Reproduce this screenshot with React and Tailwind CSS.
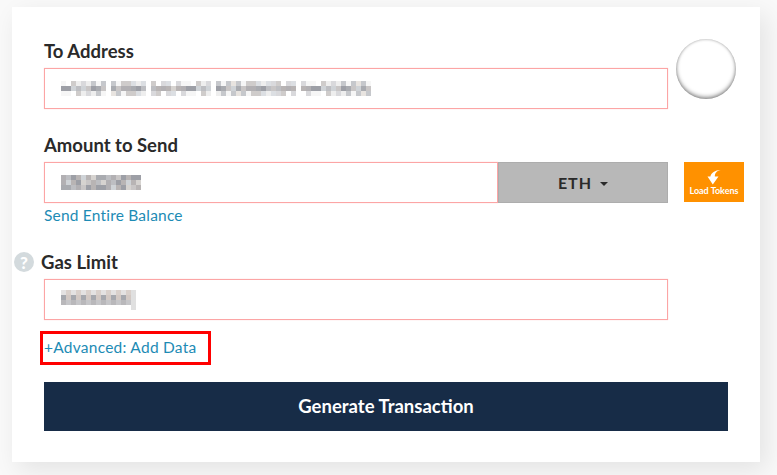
// Send-transaction form card with blurred (mosaic) field values
const SHADES = ["#a9abb0", "#bdbec2", "#c9c6c6", "#d6d3d0", "#b8b4b4", "#b2b0b3", "#cfd3d7", "#9d9fa6"];
const LIGHT = ["#ffffff", "#eeeeee", "#d9d9dc", "#e8e4e0", "#c6c8cc", "#f6f6f6", "#dcdfe3", "#cfcccb"];

function Mosaic({ cols, rows = 3, cell = 5, seed = 3, soft = false, gaps = [] }) {
  const cells = [];
  let v = seed;
  for (let y = 0; y < rows; y++) {
    const palette = soft && y !== 1 ? LIGHT : SHADES;
    for (let x = 0; x < cols; x++) {
      v = (v * 31 + 7) % 101;
      if (gaps.includes(x)) continue;
      cells.push(<rect key={`${x}-${y}`} x={x * cell} y={y * cell} width={cell} height={cell} fill={palette[v % palette.length]} />);
    }
  }
  return (
    <svg width={cols * cell} height={rows * cell} className="block" shapeRendering="crispEdges">
      {cells}
    </svg>
  );
}

// gas limit value: evenly spaced digits, so the blur alternates dark and tan
function GasMosaic() {
  const cells = [];
  for (let x = 0; x < 14; x++) {
    cells.push(<rect key={`t${x}`} x={x * 5} y={0} width={5} height={5} fill={x % 2 ? "#d9d0cb" : "#e4e2e2"} />);
    cells.push(<rect key={`m${x}`} x={x * 5} y={5} width={5} height={5} fill={x % 2 ? "#d3c9c4" : "#a6a8ae"} />);
    cells.push(<rect key={`b${x}`} x={x * 5} y={10} width={5} height={5} fill={x % 2 ? "#c6c6c9" : "#b9b8bb"} />);
  }
  return (
    <svg width={75} height={20} className="block" shapeRendering="crispEdges">
      {cells}
      <rect x={70} y={0} width={5} height={20} fill="#e0e0e0" />
    </svg>
  );
}

function Label({ children }) {
  return <div className="h-6 text-[18.5px] font-bold leading-6 text-[#2a2a2a]">{children}</div>;
}

function Field({ children, className = "" }) {
  return (
    <div className={`flex h-[41px] items-center border border-[#fca5a5] bg-white pl-4 shadow-[0_0_1px_#fecaca] ${className}`}>
      {children}
    </div>
  );
}

export default function App() {
  return (
    <div className="h-[475px] w-[777px] overflow-hidden bg-[#f9f9f9] pl-3 pt-[7px] font-['Lato',sans-serif]">
      <div className="h-[455px] w-[748px] bg-white pl-8 pt-8 shadow-[6px_8px_24px_rgba(0,0,0,0.09)]">
        <div className="flex items-start gap-2">
          <div className="w-[624px]">
            <Label>To Address</Label>
            <Field className="mt-[5px]">
              <Mosaic cols={62} seed={5} soft gaps={[9, 17, 30, 47]} />
            </Field>
          </div>
          <div className="size-[60px] rounded-full bg-white shadow-[inset_0_-2px_4px_rgba(0,0,0,0.4),inset_0_0_3px_rgba(0,0,0,0.25)]" />
        </div>

        <div className="mt-6">
          <Label>Amount to Send</Label>
          <div className="mt-[5px] flex items-start">
            <Field className="w-[454px]">
              <Mosaic cols={16} seed={11} />
            </Field>
            <button className="flex h-[41px] w-[170px] items-center justify-center gap-2 border border-[#adadad] bg-[#b8b8b8] text-[16px] font-bold tracking-[1px] text-[#2a2a2a]">
              ETH
              <span className="mt-[2px] border-x-[4px] border-t-[4px] border-x-transparent border-t-[#2a2a2a]" />
            </button>
            <button className="ml-4 flex h-10 w-[60px] flex-col items-center justify-center bg-[#ff9100] text-white">
              <svg width="14" height="15" viewBox="0 0 14 15" className="mt-[2px]">
                <path d="M13.5 0C9.5 0.8 7.8 3.4 7.8 6.6H11.5L5.8 14.5L0.5 6.6H3.4C4 3 8 0.2 13.5 0Z" fill="#fff" />
              </svg>
              <span className="text-[9px] font-bold leading-[12px]">Load Tokens</span>
            </button>
          </div>
          <a className="mt-px block h-[22px] text-[15.5px] leading-[22px] tracking-[0.2px] text-[#1d8bb5]">Send Entire Balance</a>
        </div>

        <div className="mt-6">
          <div className="-ml-[30px] flex items-center gap-[7px]">
            <span className="flex size-5 items-center justify-center rounded-full bg-[#d3dadd] text-[17px] font-black leading-none text-white">?</span>
            <Label>Gas Limit</Label>
          </div>
          <Field className="mt-[5px] w-[624px] border-[#f49a90]">
            <GasMosaic />
          </Field>
        </div>

        <div className="-ml-1 mt-[11px] flex h-[34px] w-[171px] items-center border-[3px] border-[#ff0000] pl-px">
          <a className="text-[15.5px] tracking-[0.25px] text-[#1d8bb5]">+Advanced: Add Data</a>
        </div>

        <button className="mt-[17px] h-[49px] w-[684px] bg-[#172c47] text-[18.5px] font-bold text-white">
          Generate Transaction
        </button>
      </div>
    </div>
  );
}
